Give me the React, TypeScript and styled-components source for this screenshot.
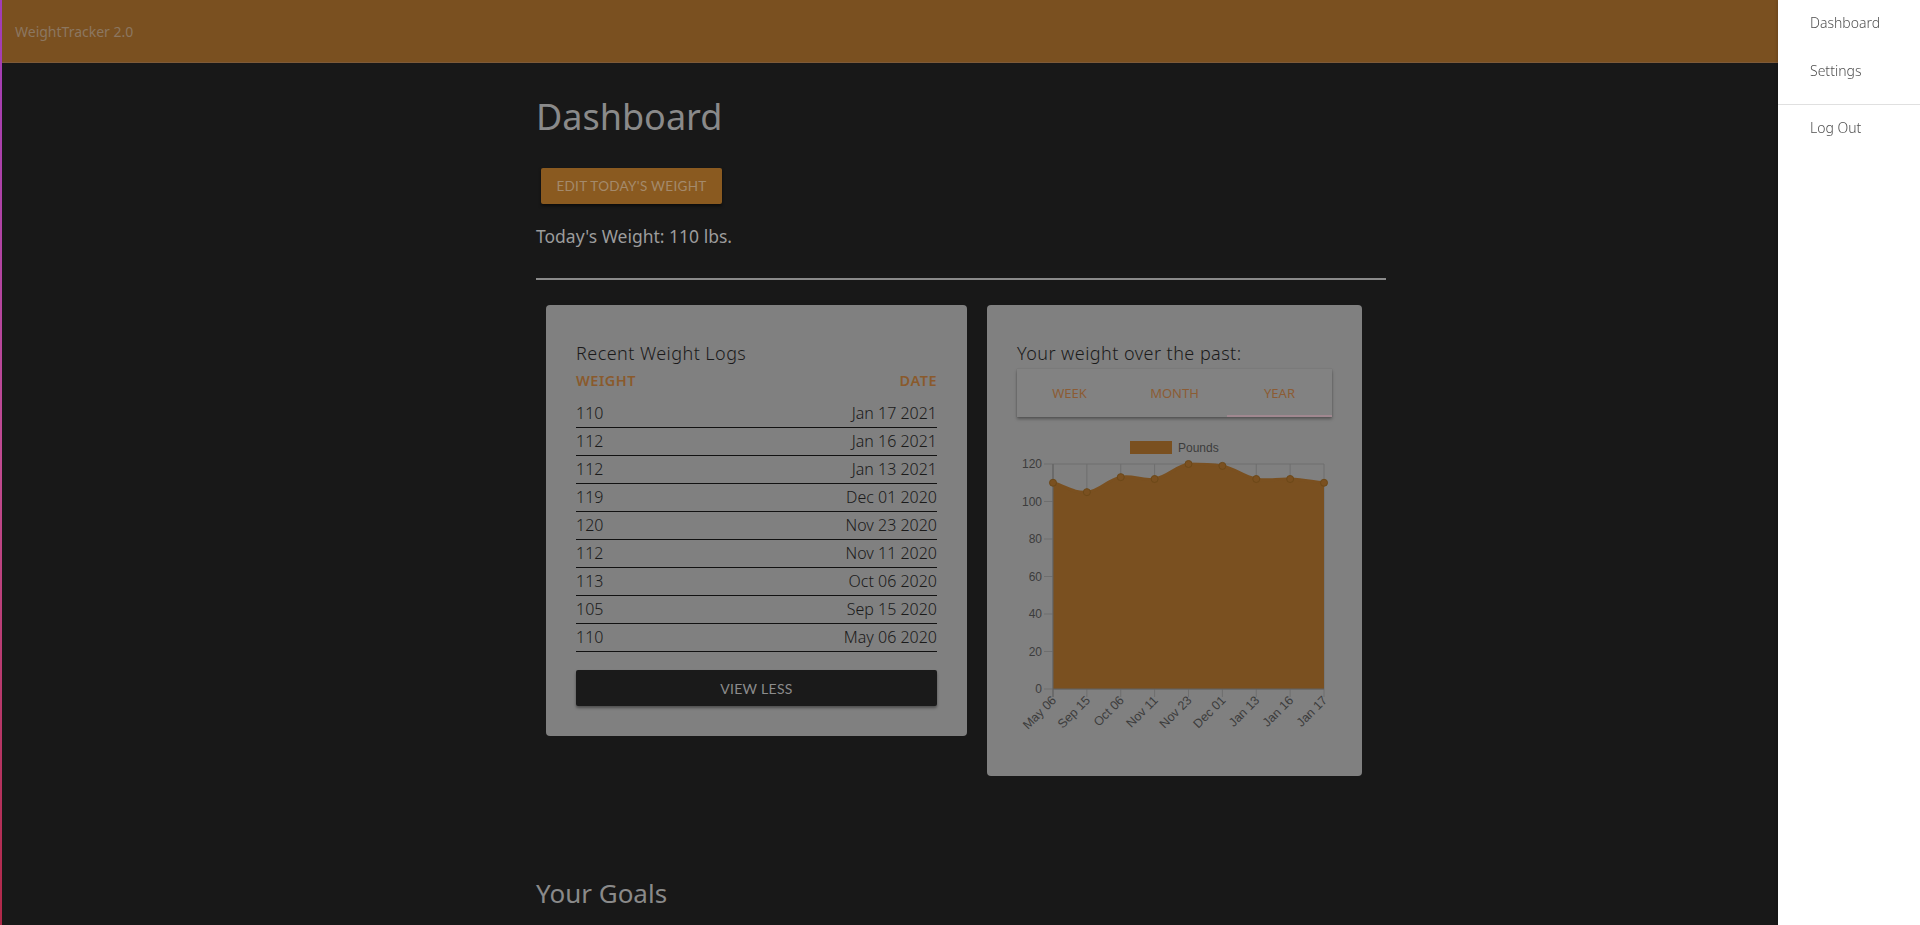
import React from "react";
import styled, { createGlobalStyle } from "styled-components";

const GlobalStyle = createGlobalStyle`
  html, body { margin: 0; padding: 0; background: #181818; }
  body { font-family: "Noto Sans", "Open Sans", sans-serif; }
  * { box-sizing: border-box; }
`;

const Page = styled.div`
  height: 925px;
  background: #181818;
  border-left: 2px solid #b03a90;
  border-image: linear-gradient(#a03cb8, #c04a90 50%, #b02848) 1;
  overflow: hidden;
`;

const Header = styled.header`
  height: 62px;
  background: #7a5020;
  display: flex;
  align-items: center;
  padding-left: 13px;
  box-shadow: 0 1px 0 #7e5a38;
`;

const Brand = styled.div`
  font-size: 14px;
  color: #8c7760;
`;

const Main = styled.main`
  width: 850px;
  margin: 0 auto;
  padding-top: 33px;
  display: flex;
  flex-direction: column;
  align-items: flex-start;
`;

const Title = styled.h1`
  margin: 0;
  font-weight: 400;
  font-size: 36px;
  line-height: 44px;
  color: #8a8a8a;
`;

const EditButton = styled.button`
  margin: 29px 0 0 5px;
  width: 181px;
  height: 36px;
  border: none;
  border-radius: 2px;
  background: #8a5a20;
  color: #a48a6c;
  font-family: "Lato", sans-serif;
  font-size: 13.5px;
  letter-spacing: 0.3px;
  text-transform: uppercase;
  box-shadow: 0 2px 3px rgba(0, 0, 0, 0.5);
`;

const TodayText = styled.p`
  margin: 20px 0 0;
  font-size: 17.5px;
  line-height: 24px;
  color: #9c9c9c;
`;

const Rule = styled.hr`
  margin: 30px 0 0;
  width: 850px;
  height: 2px;
  border: none;
  background: #8a8a8a;
`;

const CardRow = styled.div`
  margin-top: 25px;
  padding-left: 10px;
  display: flex;
  align-items: flex-start;
  gap: 20px;
`;

const Card = styled.section<{ $width: number }>`
  width: ${(p) => p.$width}px;
  background: #808080;
  border-radius: 4px;
  padding: 36px 30px 30px;
  display: flex;
  flex-direction: column;
`;

const CardTitle = styled.h2`
  margin: 0;
  font-weight: 300;
  font-size: 18px;
  line-height: 24px;
  letter-spacing: 0.45px;
  color: #1a1a1a;
`;

const LogHead = styled.div`
  margin-top: 5px;
  display: flex;
  justify-content: space-between;
  font-size: 14.5px;
  line-height: 20px;
  font-weight: 600;
  letter-spacing: 0.5px;
  color: #8a5a2c;
  text-transform: uppercase;
`;

const LogList = styled.div`
  margin-top: 10px;
  display: flex;
  flex-direction: column;
`;

const LogRow = styled.div`
  height: 28px;
  display: flex;
  justify-content: space-between;
  align-items: flex-end;
  padding-bottom: 4px;
  border-bottom: 1px solid #111;
  font-size: 16px;
  font-weight: 300;
  line-height: 20px;
  color: #1a1a1a;
`;

const DarkButton = styled.button`
  margin-top: 18px;
  height: 36px;
  width: 100%;
  border: none;
  border-radius: 2px;
  background: #1a1a1a;
  color: #8c8c8c;
  font-family: "Lato", sans-serif;
  font-size: 14px;
  letter-spacing: 0.3px;
  text-transform: uppercase;
  box-shadow: 0 2px 3px rgba(0, 0, 0, 0.4);
`;

const Tabs = styled.div`
  margin-top: 4px;
  height: 48px;
  display: flex;
  background: #828282;
  box-shadow: 0 2px 3px rgba(0, 0, 0, 0.35), 0 0 1px rgba(0, 0, 0, 0.2);
`;

const Tab = styled.div<{ $active?: boolean }>`
  flex: 1;
  display: flex;
  align-items: center;
  justify-content: center;
  font-size: 13px;
  color: #8c5c34;
  text-transform: uppercase;
  border-bottom: 2px solid ${(p) => (p.$active ? "#a08890" : "transparent")};
  padding-top: 2px;
`;

const ChartSvg = styled.svg`
  display: block;
  margin-top: 8px;
  font-family: "Liberation Sans", Arial, sans-serif;
`;

const Goals = styled.h2`
  margin: 101px 0 0;
  font-weight: 400;
  font-size: 26px;
  line-height: 32px;
  color: #8a8a8a;
`;

const Drawer = styled.aside`
  position: fixed;
  top: 0;
  right: 0;
  width: 142px;
  height: 100vh;
  background: #fff;
  box-shadow: -1px 0 3px rgba(0, 0, 0, 0.15);
  display: flex;
  flex-direction: column;
`;

const MenuList = styled.ul<{ $bottom?: number }>`
  list-style: none;
  margin: 0;
  padding: 0 0 ${(p) => p.$bottom ?? 0}px;
`;

const MenuItem = styled.li`
  height: 48px;
  display: flex;
  align-items: center;
  padding-left: 32px;
  padding-bottom: 3px;
  font-size: 14px;
  font-weight: 300;
  color: #505050;
`;

const Divider = styled.div`
  height: 1px;
  background: #e0e0e0;
`;

const logs: [number, string][] = [
  [110, "Jan 17 2021"],
  [112, "Jan 16 2021"],
  [112, "Jan 13 2021"],
  [119, "Dec 01 2020"],
  [120, "Nov 23 2020"],
  [112, "Nov 11 2020"],
  [113, "Oct 06 2020"],
  [105, "Sep 15 2020"],
  [110, "May 06 2020"],
];

const series: [string, number][] = [
  ["May 06", 110],
  ["Sep 15", 105],
  ["Oct 06", 113],
  ["Nov 11", 112],
  ["Nov 23", 120],
  ["Dec 01", 119],
  ["Jan 13", 112],
  ["Jan 16", 112],
  ["Jan 17", 110],
];

const X0 = 36;
const X1 = 307;
const YTOP = 39;
const YBOT = 264;
const step = (X1 - X0) / (series.length - 1);
const yOf = (v: number) => YBOT - (v / 120) * (YBOT - YTOP);
const pts = series.map(([, v], i) => ({ x: X0 + i * step, y: yOf(v) }));

function controls(i: number) {
  const t = 0.4;
  const curr = pts[i];
  const prev = pts[i - 1] ?? curr;
  const next = pts[i + 1] ?? curr;
  const d01 = Math.hypot(curr.x - prev.x, curr.y - prev.y);
  const d12 = Math.hypot(next.x - curr.x, next.y - curr.y);
  const sum = d01 + d12 || 1;
  const fa = (t * d01) / sum;
  const fb = (t * d12) / sum;
  return {
    p: { x: curr.x - fa * (next.x - prev.x), y: Math.max(YTOP, curr.y - fa * (next.y - prev.y)) },
    n: { x: curr.x + fb * (next.x - prev.x), y: Math.max(YTOP, curr.y + fb * (next.y - prev.y)) },
  };
}

const cps = pts.map((_, i) => controls(i));
let linePath = `M${pts[0].x},${pts[0].y}`;
for (let i = 1; i < pts.length; i++) {
  const a = cps[i - 1].n;
  const b = cps[i].p;
  linePath += ` C${a.x.toFixed(2)},${a.y.toFixed(2)} ${b.x.toFixed(2)},${b.y.toFixed(2)} ${pts[i].x.toFixed(2)},${pts[i].y.toFixed(2)}`;
}
const fillPath = `${linePath} L${X1},${YBOT} L${X0},${YBOT} Z`;
const yTicks = [120, 100, 80, 60, 40, 20, 0];

function WeightChart() {
  return (
    <ChartSvg width={315} height={321} viewBox="0 0 315 321">
      <rect x={113} y={16} width={42} height={13} fill="#7a5020" />
      <text x={161} y={26.5} fontSize={12} fill="#3c3c3c">
        Pounds
      </text>
      {yTicks.map((v) => (
        <g key={v}>
          <line x1={27} x2={X1} y1={yOf(v)} y2={yOf(v)} stroke="#6e6e6e" strokeWidth={1} />
          <text x={25} y={yOf(v) + 4} fontSize={12} fill="#3c3c3c" textAnchor="end">
            {v}
          </text>
        </g>
      ))}
      {pts.map((p, i) => (
        <line key={i} x1={p.x} x2={p.x} y1={YTOP} y2={YBOT + 8} stroke="#6e6e6e" strokeWidth={1} />
      ))}
      <path d={fillPath} fill="#7a5020" />
      <path d={linePath} fill="none" stroke="#7a5020" strokeWidth={3} />
      <line x1={X0} x2={X1} y1={YBOT} y2={YBOT} stroke="#606060" strokeWidth={1} />
      <line x1={X0} x2={X0} y1={YTOP} y2={YBOT + 8} stroke="#606060" strokeWidth={1} />
      {pts.map((p, i) => (
        <circle key={i} cx={p.x} cy={p.y} r={3.5} fill="#7a5020" stroke="#6c4818" strokeWidth={1} />
      ))}
      {series.map(([label], i) => {
        const x = pts[i].x + 4;
        const y = YBOT + 12;
        return (
          <text
            key={label}
            x={x}
            y={y}
            fontSize={12.5}
            fill="#3c3c3c"
            textAnchor="end"
            transform={`rotate(-45 ${x} ${y})`}
          >
            {label}
          </text>
        );
      })}
    </ChartSvg>
  );
}

export default function App() {
  return (
    <Page>
      <GlobalStyle />
      <Header>
        <Brand>WeightTracker 2.0</Brand>
      </Header>
      <Main>
        <Title>Dashboard</Title>
        <EditButton>Edit Today's Weight</EditButton>
        <TodayText>Today's Weight: 110 lbs.</TodayText>
        <Rule />
        <CardRow>
          <Card $width={421}>
            <CardTitle>Recent Weight Logs</CardTitle>
            <LogHead>
              <span>Weight</span>
              <span>Date</span>
            </LogHead>
            <LogList>
              {logs.map(([w, d]) => (
                <LogRow key={d}>
                  <span>{w}</span>
                  <span>{d}</span>
                </LogRow>
              ))}
            </LogList>
            <DarkButton>View Less</DarkButton>
          </Card>
          <Card $width={375}>
            <CardTitle>Your weight over the past:</CardTitle>
            <Tabs>
              <Tab>Week</Tab>
              <Tab>Month</Tab>
              <Tab $active>Year</Tab>
            </Tabs>
            <WeightChart />
          </Card>
        </CardRow>
        <Goals>Your Goals</Goals>
      </Main>
      <Drawer>
        <MenuList $bottom={8}>
          <MenuItem>Dashboard</MenuItem>
          <MenuItem>Settings</MenuItem>
        </MenuList>
        <Divider />
        <MenuList>
          <MenuItem>Log Out</MenuItem>
        </MenuList>
      </Drawer>
    </Page>
  );
}
